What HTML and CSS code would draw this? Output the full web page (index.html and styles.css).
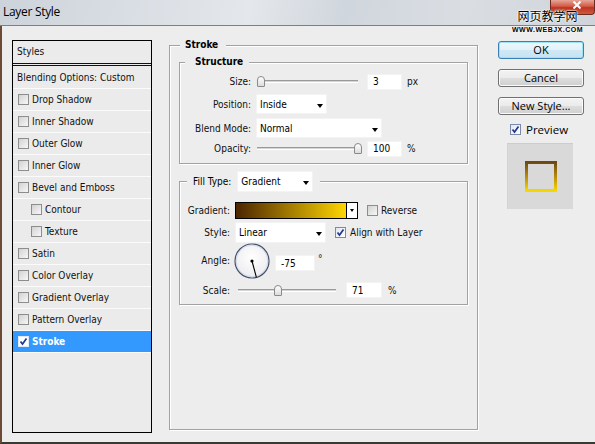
FILE: index.html
```html
<!DOCTYPE html>
<html>
<head>
<meta charset="utf-8">
<title>Layer Style</title>
<link rel="stylesheet" href="styles.css">
</head>
<body>
<div class="window">
  <div class="titlebar">
    <span class="title">Layer Style</span>
    <div class="close"><svg width="10" height="8" viewBox="0 0 10 8"><path d="M1.5 0.5 L8.5 7.5 M8.5 0.5 L1.5 7.5" stroke="#fff" stroke-width="2"/></svg></div>
  </div>
  <div class="watermark">
    <span class="wm-cn">网页教学网</span>
    <span class="wm-en">WWW.WEBJX.COM</span>
  </div>
  <div class="content">
    <div class="styles-panel">
      <div class="sp-head">Styles</div>
      <div class="sp-row sp-blend">Blending Options: Custom</div>
      <div class="sp-row"><span class="cb"></span>Drop Shadow</div>
      <div class="sp-row"><span class="cb"></span>Inner Shadow</div>
      <div class="sp-row"><span class="cb"></span>Outer Glow</div>
      <div class="sp-row"><span class="cb"></span>Inner Glow</div>
      <div class="sp-row"><span class="cb"></span>Bevel and Emboss</div>
      <div class="sp-row sp-sub"><span class="cb"></span>Contour</div>
      <div class="sp-row sp-sub"><span class="cb"></span>Texture</div>
      <div class="sp-row"><span class="cb"></span>Satin</div>
      <div class="sp-row"><span class="cb"></span>Color Overlay</div>
      <div class="sp-row"><span class="cb"></span>Gradient Overlay</div>
      <div class="sp-row"><span class="cb"></span>Pattern Overlay</div>
      <div class="sp-row sp-selected"><span class="cb cb-on"><svg width="9" height="9" viewBox="0 0 9 9"><polyline points="1.5,4.5 3.5,7 7.5,1.5" fill="none" stroke="#23378c" stroke-width="1.7"/></svg></span>Stroke</div>
    </div>

    <fieldset class="group outer">
      <legend class="lg lg-stroke">Stroke</legend>
      <div class="outer-inner">
        <fieldset class="group structure">
          <legend class="lg lg-structure">Structure</legend>
          <div class="row r-size">
            <span class="lbl lbl-s">Size:</span>
            <div class="slider sl-s"><div class="track"></div><div class="thumb" style="left:0px"></div></div>
            <div class="inp inp-s">3</div>
            <span class="unit">px</span>
          </div>
          <div class="row r-pos">
            <span class="lbl lbl-s">Position:</span>
            <div class="sel sel-pos"><span>Inside</span><i class="arrow"></i></div>
          </div>
          <div class="row r-blend">
            <span class="lbl lbl-s">Blend Mode:</span>
            <div class="sel sel-blend"><span>Normal</span><i class="arrow"></i></div>
          </div>
          <div class="row r-opac">
            <span class="lbl lbl-s">Opacity:</span>
            <div class="slider sl-s"><div class="track"></div><div class="thumb" style="left:97px"></div></div>
            <div class="inp inp-s">100</div>
            <span class="unit">%</span>
          </div>
        </fieldset>

        <fieldset class="group fill">
          <legend class="lg lg-fill"><span class="fill-lbl">Fill Type:</span><div class="sel sel-fill"><span>Gradient</span><i class="arrow"></i></div></legend>
          <div class="row r-grad">
            <span class="lbl lbl-f">Gradient:</span>
            <div class="grad"><div class="grad-fill"></div><div class="grad-dd"><i class="arrow arrow-sm"></i></div></div>
            <span class="cb cb-rev"></span><span class="cb-text">Reverse</span>
          </div>
          <div class="row r-style">
            <span class="lbl lbl-f">Style:</span>
            <div class="sel sel-style"><span>Linear</span><i class="arrow"></i></div>
            <span class="cb cb-on cb-align"><svg width="9" height="9" viewBox="0 0 9 9"><polyline points="1.5,4.5 3.5,7 7.5,1.5" fill="none" stroke="#23378c" stroke-width="1.7"/></svg></span><span class="cb-text">Align with Layer</span>
          </div>
          <div class="row r-angle">
            <span class="lbl lbl-f">Angle:</span>
            <svg class="dial" width="36" height="37" viewBox="0 0 36 37">
              <defs>
                <radialGradient id="dg" cx="50%" cy="40%" r="60%">
                  <stop offset="0" stop-color="#ffffff"/>
                  <stop offset="1" stop-color="#ececf0"/>
                </radialGradient>
              </defs>
              <circle cx="18" cy="18" r="17" fill="url(#dg)" stroke="#44506a" stroke-width="1.2"/>
              <circle cx="18" cy="18" r="15.8" fill="none" stroke="#c9d3e6" stroke-width="0.8"/>
              <line x1="18" y1="18" x2="22.4" y2="34.4" stroke="#000" stroke-width="1.1"/>
              <circle cx="18" cy="18" r="1.6" fill="#000"/>
            </svg>
            <div class="inp inp-angle">-75</div>
            <span class="deg">°</span>
          </div>
          <div class="row r-scale">
            <span class="lbl lbl-f">Scale:</span>
            <div class="slider sl-scale"><div class="track"></div><div class="thumb" style="left:36px"></div></div>
            <div class="inp inp-scale">71</div>
            <span class="unit unit-scale">%</span>
          </div>
        </fieldset>
      </div>
    </fieldset>

    <div class="side">
      <div class="btn btn-ok">OK</div>
      <div class="btn">Cancel</div>
      <div class="btn">New Style...</div>
      <div class="preview-row"><span class="cb cb-on"><svg width="9" height="9" viewBox="0 0 9 9"><polyline points="1.5,4.5 3.5,7 7.5,1.5" fill="none" stroke="#23378c" stroke-width="1.7"/></svg></span><span class="pv-text">Preview</span></div>
      <div class="preview-box">
        <svg width="32" height="31" viewBox="0 0 32 31">
          <defs>
            <linearGradient id="pg" x1="0" y1="0" x2="0" y2="1">
              <stop offset="0" stop-color="#6e4a10"/>
              <stop offset="0.5" stop-color="#b88a0c"/>
              <stop offset="1" stop-color="#f6d700"/>
            </linearGradient>
          </defs>
          <rect x="1.5" y="1.5" width="29" height="28" fill="none" stroke="url(#pg)" stroke-width="3"/>
        </svg>
      </div>
    </div>
  </div>
</div>
</body>
</html>
```

FILE: styles.css
```css
* { box-sizing: border-box; }
html, body { margin: 0; padding: 0; }
body {
  width: 595px;
  height: 444px;
  overflow: hidden;
  background: #ededed;
  font-family: "DejaVu Sans Condensed", "DejaVu Sans", sans-serif;
  font-size: 10px;
  color: #111;
}
.window {
  position: relative;
  width: 595px;
  height: 444px;
  display: flex;
  flex-direction: column;
  background: #ededed;
}
.titlebar {
  flex: none;
  height: 26px;
  display: flex;
  justify-content: space-between;
  align-items: flex-start;
  border-bottom: 1px solid #78818b;
  background: linear-gradient(100deg, #cdd3da 0%, #d9dee4 22%, #e4e7eb 42%, #d0d6dd 58%, #dadee3 78%, #cfd4da 100%);
}
.title {
  font-family: "Open Sans", sans-serif;
  font-size: 12px;
  line-height: 24px;
  letter-spacing: -0.3px;
  padding-left: 3px;
  color: #000;
}
.close {
  width: 45px;
  height: 15px;
  border: 1px solid #6e2a20;
  border-top: none;
  border-radius: 0 0 4px 4px;
  background: linear-gradient(#e7a597, #d25a45 45%, #bb3522 55%, #cc5b3e);
  display: flex;
  align-items: flex-start;
  justify-content: center;
  padding-top: 1px;
  padding-left: 8px;
}
.watermark {
  position: absolute;
  left: 512px;
  top: 9px;
  display: flex;
  flex-direction: column;
  align-items: center;
}
.wm-cn {
  font-family: "Noto Sans CJK SC", sans-serif;
  font-size: 12px;
  line-height: 14px;
  color: #000;
  text-shadow: 0 0 2px #fff, 0 0 2px #fff, 0 0 1px #fff, 0 0 1px #fff;
}
.wm-en {
  margin-top: 3px;
  font: bold 7px/7px "Liberation Sans", sans-serif;
  letter-spacing: 0.5px;
  color: #000;
  text-shadow: 0 0 1px #fff, 0 0 2px #fff, 0 0 1px #fff;
}

.content {
  flex: 1;
  display: flex;
  align-items: flex-start;
  border-left: 2px solid #6c4a36;
  border-bottom: 2px solid #3a3a34;
  padding-left: 10px;
}

/* Styles list */
.styles-panel {
  width: 140px;
  height: 393px;
  margin-top: 14px;
  border: 1px solid #000;
  background: #ebebeb;
}
.sp-head {
  height: 25px;
  line-height: 21px;
  padding-left: 4px;
  border-bottom: 3px double #111;
}
.sp-row {
  height: 22px;
  display: flex;
  align-items: center;
  padding-left: 5px;
  border-bottom: 1px solid #fbfbfb;
}
.sp-blend { margin-top: 1px; padding-left: 4px; }
.sp-sub { padding-left: 18px; }
.sp-selected {
  background: #3399ff;
  color: #fff;
  font-weight: bold;
}

.cb {
  flex: none;
  width: 11px;
  height: 11px;
  margin-right: 3px;
  border: 1px solid #8d8d8d;
  background: linear-gradient(135deg, #d2d2d2, #f7f7f7);
  display: inline-flex;
  align-items: center;
  justify-content: center;
}
.cb-on {
  border-color: #7a8aa8;
  background: linear-gradient(135deg, #dfe6f2, #ffffff);
}
.sp-selected .cb-on { background: #fff; border-color: #dfe8f5; }

/* Fieldsets */
.group {
  margin: 0;
  padding: 0;
  min-width: 0;
  border: 1px solid #a2a2a2;
  box-shadow: 1px 1px 0 #fff, inset 1px 1px 0 #fff;
}
.lg {
  background: #ededed;
  line-height: 14px;
  color: #000;
}
.outer {
  width: 309px;
  height: 392px;
  margin-top: 12px;
  margin-left: 17px;
}
.lg-stroke {
  font-weight: bold;
  margin-left: 10px;
  padding: 0 8px 0 5px;
}
.outer-inner { padding: 3px 9px 0; }

.structure { width: 289px; height: 109px; }
.lg-structure {
  font-weight: bold;
  margin-left: 5px;
  padding: 0 6px 0 10px;
}
.fill { width: 289px; height: 134px; margin-top: 7px; }
.lg-fill {
  margin-left: 7px;
  padding: 0 7px 0 6px;
  display: flex;
  align-items: center;
  line-height: 21px;
}
.fill-lbl { margin-right: 6px; }

.row { display: flex; align-items: center; }
.lbl { flex: none; text-align: right; margin-right: 5px; color: #111; }
.lbl-s { width: 71px; }
.lbl-f { width: 50px; }

.r-size { margin-top: 4px; height: 17px; }
.r-pos { margin-top: 4px; height: 20px; }
.r-blend { margin-top: 4px; height: 20px; }
.r-opac { margin-top: 2px; height: 17px; }

.r-grad { margin-top: 10px; height: 17px; }
.r-style { margin-top: 3px; height: 21px; }
.r-angle { height: 37px; align-items: flex-start; }
.r-angle .lbl { margin-top: 12px; }
.r-scale { margin-top: 2px; height: 16px; }

/* sliders */
.slider {
  position: relative;
  height: 13px;
  display: flex;
  align-items: center;
  flex: none;
}
.sl-s { width: 101px; margin-left: 1px; }
.sl-scale { width: 98px; margin-left: 3px; }
.track {
  width: 100%;
  height: 3px;
  border-top: 1px solid #9a9a9a;
  border-bottom: 1px solid #ffffff;
  background: #d4d4d4;
}
.thumb {
  position: absolute;
  top: 1px;
  width: 8px;
  height: 11px;
  border: 1px solid #8a8a8a;
  border-radius: 4px 4px 1px 1px;
  background: linear-gradient(#ffffff, #dcdcdc);
}

/* inputs */
.inp {
  flex: none;
  height: 16px;
  background: #fff;
  border: 1px solid #f3f3f3;
  display: flex;
  align-items: center;
  padding-left: 5px;
  color: #000;
}
.inp-s { width: 35px; margin-left: 9px; }
.inp-angle { width: 40px; margin-left: 5px; margin-top: 12px; }
.inp-scale { width: 36px; margin-left: 10px; }
.unit { margin-left: 5px; }
.unit-scale { margin-left: 6px; }
.deg { margin-left: 3px; margin-top: 10px; }

/* selects */
.sel {
  flex: none;
  height: 20px;
  background: #fff;
  border: 1px solid #f3f3f3;
  display: flex;
  align-items: center;
  justify-content: space-between;
  padding: 1px 3px 0 3px;
  color: #000;
  line-height: 14px;
}
.sel-pos { width: 71px; }
.sel-blend { width: 126px; }
.sel-fill { width: 76px; height: 21px; }
.sel-style { width: 91px; height: 21px; }
.arrow {
  width: 0;
  height: 0;
  border-left: 3.5px solid transparent;
  border-right: 3.5px solid transparent;
  border-top: 4px solid #000;
  margin-top: 2px;
}
.arrow-sm {
  border-left-width: 2.5px;
  border-right-width: 2.5px;
  border-top-width: 3px;
  margin-top: 0;
}

/* gradient swatch */
.grad {
  flex: none;
  width: 123px;
  height: 17px;
  border: 1px solid #000;
  display: flex;
}
.grad-fill {
  flex: 1;
  background: linear-gradient(90deg, #4b2500, #ffd600);
}
.grad-dd {
  width: 11px;
  border-left: 1px solid #000;
  background: #fff;
  display: flex;
  align-items: center;
  justify-content: center;
}
.cb-rev { margin-left: 9px; }
.cb-align { margin-left: 9px; margin-right: 4px; }
.cb-text { color: #111; }
.dial { flex: none; margin-left: -1px; }

/* right side */
.side {
  width: 86px;
  margin-left: 20px;
  margin-top: 15px;
  display: flex;
  flex-direction: column;
  font-family: "Open Sans", sans-serif;
  font-size: 11px;
  color: #000;
}
.btn {
  height: 18px;
  border: 1px solid #707070;
  border-radius: 3px;
  background: linear-gradient(#f3f3f3 0%, #ebebeb 48%, #dddddd 52%, #cfcfcf 100%);
  box-shadow: inset 0 0 0 1px #fbfbfb;
  display: flex;
  align-items: center;
  justify-content: center;
  line-height: 14px;
}
.btn + .btn { margin-top: 10px; }
.btn-ok {
  border-color: #3c7fb1;
  box-shadow: inset 0 0 0 1px #9fe1f7;
  background: linear-gradient(#eef7fc 0%, #e3f1f9 48%, #d0e8f5 52%, #c4e2f3 100%);
}
.preview-row {
  margin-top: 9px;
  height: 11px;
  display: flex;
  align-items: center;
  padding-left: 12px;
}
.preview-row .cb { margin-right: 5px; }
.pv-text { font-size: 11.5px; line-height: 11px; }
.preview-box {
  margin-top: 8px;
  margin-left: 9px;
  width: 66px;
  height: 66px;
  background: #d9d9d9;
  border-top: 1px solid #cdcdcd;
  border-left: 1px solid #d3d3d3;
  display: flex;
  align-items: center;
  justify-content: center;
}
```
